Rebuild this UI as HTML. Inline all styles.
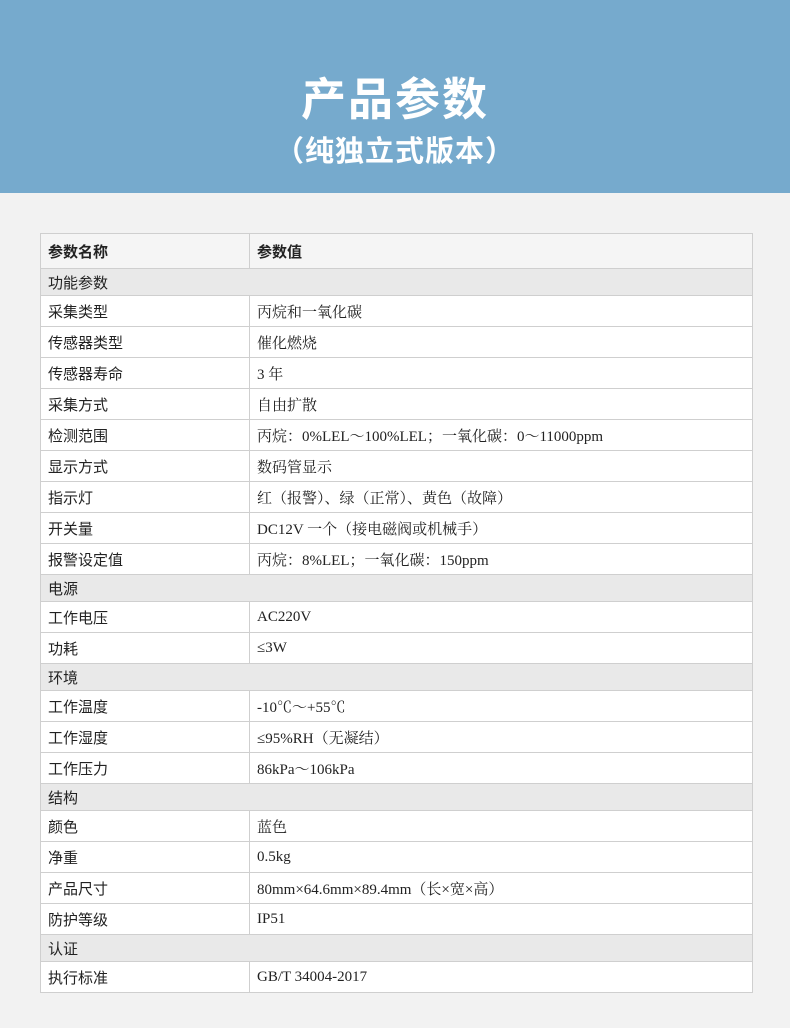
<!DOCTYPE html>
<html><head><meta charset="utf-8"><style>
body{margin:0;width:790px;height:1028px;background:#f2f2f2;font-family:"Liberation Serif","Noto Serif CJK SC",serif;overflow:hidden}
.hd{height:193px;background:#76aacd;color:#fff;text-align:center;font-family:"Liberation Sans","Noto Sans CJK SC",sans-serif;font-weight:bold;position:relative}
.t1{position:absolute;top:70px;left:0;right:0;font-size:45px;line-height:60px;letter-spacing:2px}
.t2{position:absolute;top:132px;left:0;right:0;font-size:29px;line-height:40px;letter-spacing:1px}
table{position:absolute;left:40px;top:233px;width:713px;border-collapse:collapse;background:#fff;font-size:15px;color:#222}
td{border:1px solid #cfcfcf;padding:0 0 0 7px;height:30px}
td:first-child{width:201px;font-family:"Liberation Sans","Noto Sans CJK SC",sans-serif}
tr.h td{height:34px;font-family:"Liberation Sans","Noto Sans CJK SC",sans-serif;font-weight:bold;background:#f5f5f5}
tr.s td{height:26px;background:#e9e9e9}
</style></head><body>
<div class="hd"><div class="t1">产品参数</div><div class="t2">（纯独立式版本）</div></div>
<table>
<tr class="h"><td>参数名称</td><td>参数值</td></tr>
<tr class="s"><td colspan="2">功能参数</td></tr>
<tr><td>采集类型</td><td>丙烷和一氧化碳</td></tr>
<tr><td>传感器类型</td><td>催化燃烧</td></tr>
<tr><td>传感器寿命</td><td>3 年</td></tr>
<tr><td>采集方式</td><td>自由扩散</td></tr>
<tr><td>检测范围</td><td>丙烷：0%LEL～100%LEL；一氧化碳：0～11000ppm</td></tr>
<tr><td>显示方式</td><td>数码管显示</td></tr>
<tr><td>指示灯</td><td>红（报警）、绿（正常）、黄色（故障）</td></tr>
<tr><td>开关量</td><td>DC12V 一个（接电磁阀或机械手）</td></tr>
<tr><td>报警设定值</td><td>丙烷：8%LEL；一氧化碳：150ppm</td></tr>
<tr class="s"><td colspan="2">电源</td></tr>
<tr><td>工作电压</td><td>AC220V</td></tr>
<tr><td>功耗</td><td>≤3W</td></tr>
<tr class="s"><td colspan="2">环境</td></tr>
<tr><td>工作温度</td><td>-10℃～+55℃</td></tr>
<tr><td>工作湿度</td><td>≤95%RH（无凝结）</td></tr>
<tr><td>工作压力</td><td>86kPa～106kPa</td></tr>
<tr class="s"><td colspan="2">结构</td></tr>
<tr><td>颜色</td><td>蓝色</td></tr>
<tr><td>净重</td><td>0.5kg</td></tr>
<tr><td>产品尺寸</td><td>80mm×64.6mm×89.4mm（长×宽×高）</td></tr>
<tr><td>防护等级</td><td>IP51</td></tr>
<tr class="s"><td colspan="2">认证</td></tr>
<tr><td>执行标准</td><td>GB/T 34004-2017</td></tr>
</table>
</body></html>
